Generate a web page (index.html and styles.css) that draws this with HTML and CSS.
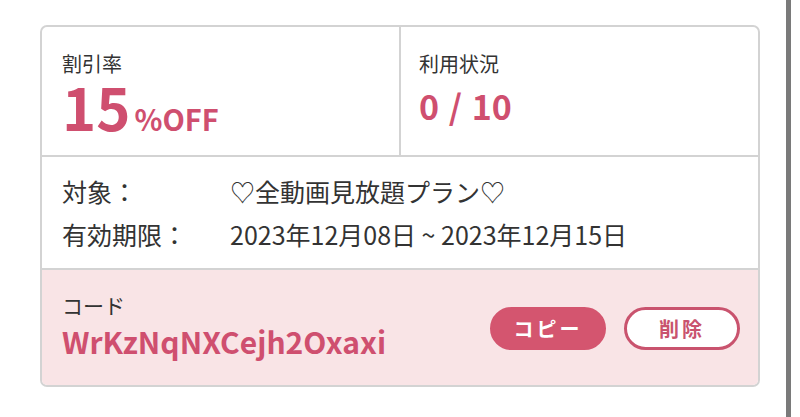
FILE: index.html
```html
<!DOCTYPE html>
<html lang="ja">

<head>
    <meta charset="UTF-8">
    <meta name="viewport" content="width=device-width, initial-scale=1.0">
    <title>クーポン</title>
    <link rel="stylesheet" href="styles.css">
</head>

<body>
    <div class="page">
        <div class="coupon_card">
            <div class="coupon_summary">
                <div class="summary_cell">
                    <div class="summary_label">割引率</div>
                    <div class="discount_value"><span class="discount_num">15</span><span class="discount_unit">%OFF</span></div>
                </div>
                <div class="summary_cell">
                    <div class="summary_label">利用状況</div>
                    <div class="usage_value">0 / 10</div>
                </div>
            </div>
            <div class="coupon_detail">
                <div class="detail_row">
                    <span class="detail_label">対象：</span>
                    <span class="detail_value">♡全動画見放題プラン♡</span>
                </div>
                <div class="detail_row">
                    <span class="detail_label">有効期限：</span>
                    <span class="detail_value">2023年12月08日 ~ 2023年12月15日</span>
                </div>
            </div>
            <div class="coupon_code">
                <div class="code_block">
                    <div class="code_label">コード</div>
                    <div class="code_value">WrKzNqNXCejh2Oxaxi</div>
                </div>
                <div class="code_buttons">
                    <button class="btn btn_copy">コピー</button>
                    <button class="btn btn_delete">削除</button>
                </div>
            </div>
        </div>
        <div class="side_bar"></div>
    </div>
</body>

</html>
```

FILE: styles.css
```css
body,
html {
    margin: 0;
    height: 100%;
    background-color: white;
    font-family: "Noto Sans CJK JP", "Noto Sans", sans-serif;
    color: #333333;
}

.page {
    display: flex;
    align-items: flex-start;
    height: 100%;
    padding-left: 40px;
    box-sizing: border-box;
}

.coupon_card {
    width: 720px;
    margin-top: 25px;
    border: 2px solid #d3d3d3;
    border-radius: 7px;
    overflow: hidden;
    box-sizing: border-box;
}

.side_bar {
    width: 5px;
    height: 100%;
    margin-left: 26px;
    background-color: #7a7a7a;
}

.coupon_summary {
    display: grid;
    grid-template-columns: 357px 1fr;
    height: 128px;
    border-bottom: 2px solid #d3d3d3;
}

.summary_cell {
    padding: 23px 0 0 20px;
}

.summary_cell + .summary_cell {
    border-left: 2px solid #d3d3d3;
    padding-left: 18px;
}

.summary_label {
    font-size: 20px;
    line-height: 28px;
}

.discount_value {
    color: #cf4f6f;
    font-weight: bold;
    line-height: 56px;
}

.discount_num {
    font-size: 58px;
}

.discount_unit {
    font-size: 29px;
    margin-left: 4px;
}

.usage_value {
    margin-top: 6px;
    color: #cf4f6f;
    font-size: 34px;
    font-weight: bold;
    line-height: 44px;
    word-spacing: 2px;
}

.coupon_detail {
    padding: 13px 20px 12px;
    border-bottom: 2px solid #d3d3d3;
}

.detail_row {
    display: flex;
    font-size: 25px;
    line-height: 43px;
}

.detail_label {
    width: 168px;
}

.coupon_code {
    display: flex;
    align-items: center;
    justify-content: space-between;
    height: 115px;
    padding: 0 18px 0 20px;
    background-color: #f9e4e6;
}

.code_label {
    font-size: 21px;
    line-height: 26px;
}

.code_value {
    color: #cf4f6f;
    font-size: 30px;
    font-weight: bold;
    line-height: 46px;
}

.code_buttons {
    display: flex;
    gap: 18px;
    margin-top: 2px;
}

.btn {
    width: 116px;
    height: 43px;
    border-radius: 22px;
    font-family: "Noto Sans CJK JP", sans-serif;
    font-size: 20px;
    font-weight: bold;
    letter-spacing: 3px;
    cursor: pointer;
}

.btn_copy {
    background-color: #d4556f;
    border: 3px solid #d4556f;
    color: white;
}

.btn_delete {
    background-color: white;
    border: 3px solid #c9536e;
    color: #c9536e;
}
```
